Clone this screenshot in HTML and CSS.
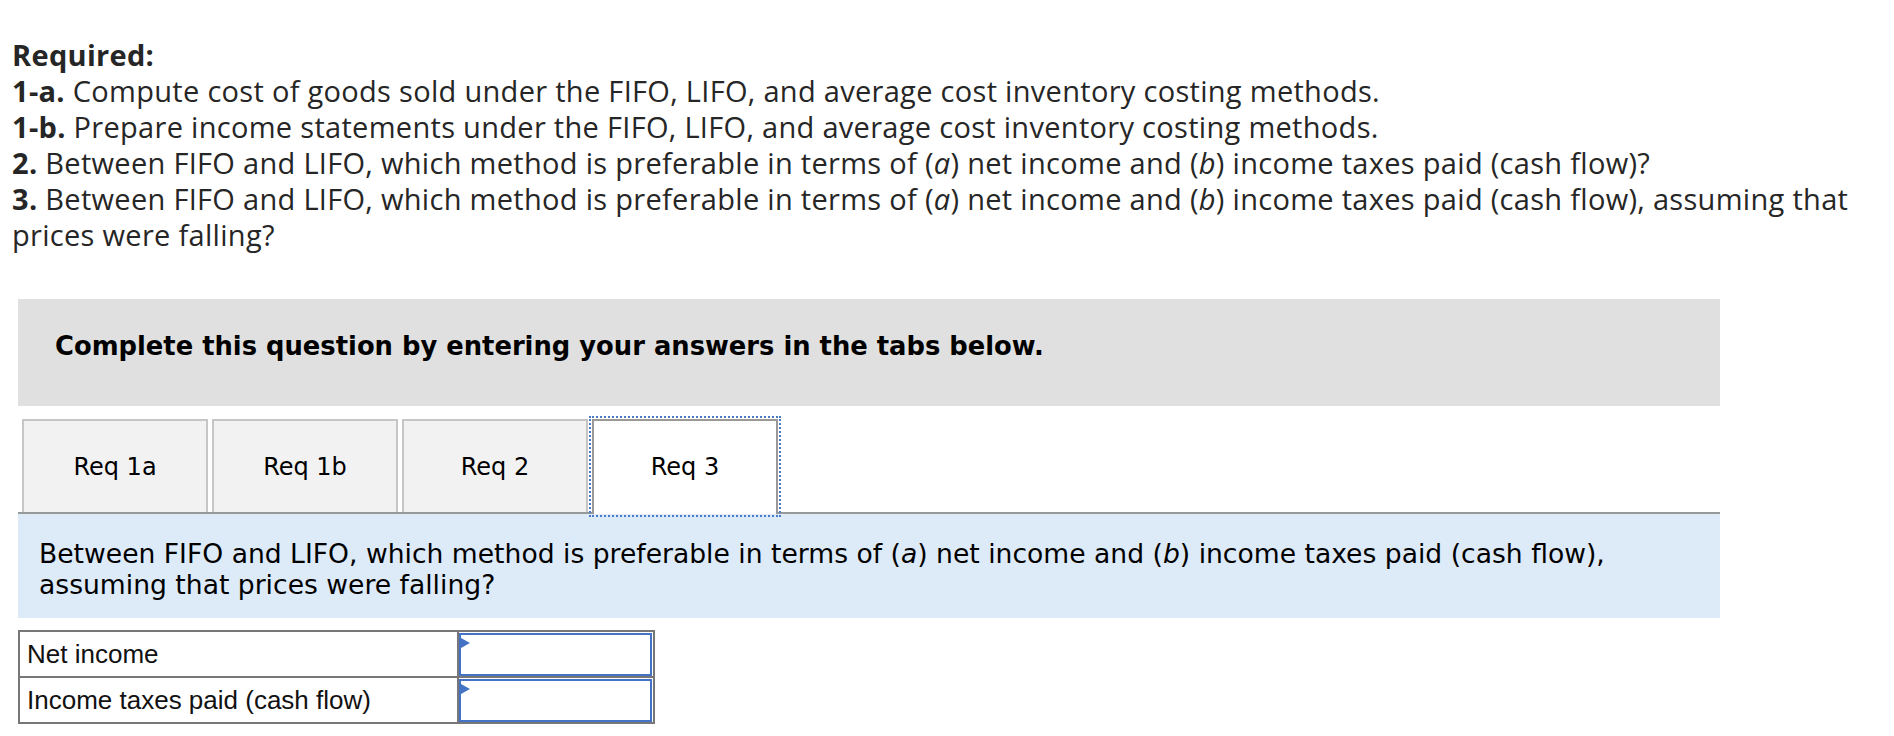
FILE: index.html
```html
<!DOCTYPE html>
<html>
<head>
<meta charset="utf-8">
<link rel="stylesheet" href="styles.css">
</head>
<body>
<div class="page">
  <div class="required">
    <p class="line"><b>Required:</b></p>
    <p class="line"><b>1-a.</b> Compute cost of goods sold under the FIFO, LIFO, and average cost inventory costing methods.</p>
    <p class="line"><b>1-b.</b> Prepare income statements under the FIFO, LIFO, and average cost inventory costing methods.</p>
    <p class="line"><b>2.</b> Between FIFO and LIFO, which method is preferable in terms of (<i>a</i>) net income and (<i>b</i>) income taxes paid (cash flow)?</p>
    <p class="line"><b>3.</b> Between FIFO and LIFO, which method is preferable in terms of (<i>a</i>) net income and (<i>b</i>) income taxes paid (cash flow), assuming that prices were falling?</p>
  </div>

  <div class="instructions">Complete this question by entering your answers in the tabs below.</div>

  <div class="tabs">
    <div class="tab">Req 1a</div>
    <div class="tab">Req 1b</div>
    <div class="tab">Req 2</div>
    <div class="tab active">Req 3</div>
  </div>

  <div class="panel">Between FIFO and LIFO, which method is preferable in terms of (<i>a</i>) net income and (<i>b</i>) income taxes paid (cash flow), assuming that prices were falling?</div>

  <table class="answers">
    <tr>
      <td class="label">Net income</td>
      <td class="input"><div class="box"><span class="tri"></span></div></td>
    </tr>
    <tr>
      <td class="label">Income taxes paid (cash flow)</td>
      <td class="input"><div class="box"><span class="tri"></span></div></td>
    </tr>
  </table>
</div>
</body>
</html>
```
FILE: styles.css
```css
html, body {
  margin: 0;
  padding: 0;
  background: #ffffff;
}

.page {
  padding-top: 37px;
}

.required {
  padding-left: 12px;
  padding-right: 0;
  font-family: "Open Sans", "Lato", sans-serif;
  font-size: 29px;
  letter-spacing: 0.3px;
  line-height: 36px;
  color: #262626;
}

.line {
  margin: 0;
}

.line b {
  font-weight: 700;
}

.line b,
.line i,
.panel i {
  display: inline-block;
}

.instructions {
  margin: 46px 0 0 18px;
  width: 1702px;
  height: 107px;
  box-sizing: border-box;
  padding-left: 37px;
  padding-bottom: 14px;
  display: flex;
  align-items: center;
  background: #e0e0e0;
  font-family: "DejaVu Sans", Verdana, sans-serif;
  font-weight: bold;
  font-size: 25.8px;
  color: #000;
}

.tabs {
  display: flex;
  gap: 4px;
  margin: 13px 0 0 22px;
  height: 93px;
  position: relative;
  z-index: 1;
}

.tab {
  width: 186px;
  height: 93px;
  box-sizing: border-box;
  border: 2px solid #c6c6c6;
  border-bottom: none;
  background: #f2f2f2;
  display: flex;
  align-items: center;
  justify-content: center;
  font-family: "DejaVu Sans", Verdana, sans-serif;
  font-size: 24px;
  color: #000;
}

.tab.active {
  background: #ffffff;
  border-color: #999999;
  height: 95px;
  outline: 2px dotted #4a7bc4;
  outline-offset: 1px;
  padding-bottom: 2px;
}

.panel {
  margin-left: 18px;
  width: 1702px;
  box-sizing: border-box;
  border-top: 2px solid #979a9a;
  background: #ddeaf7;
  padding: 24px 21px 18px 21px;
  font-family: "DejaVu Sans", Verdana, sans-serif;
  font-size: 26.6px;
  line-height: 31px;
  color: #000;
}

.answers {
  margin: 12px 0 0 18px;
  border-collapse: collapse;
  font-family: "Liberation Sans", Arial, sans-serif;
  font-size: 26px;
  color: #111;
}

.answers td {
  border: 2px solid #777777;
  height: 46px;
  box-sizing: border-box;
  padding: 0;
}

.answers td.label {
  width: 439px;
  padding-left: 7px;
}

.answers td.input {
  width: 196px;
  padding: 1px 1px 0 0;
  vertical-align: top;
}

.box {
  position: relative;
  height: 43px;
  box-sizing: border-box;
  border: 2px solid #4472c4;
}

.tri {
  position: absolute;
  left: 0;
  top: 3px;
  width: 0;
  height: 0;
  border-top: 5px solid transparent;
  border-bottom: 5px solid transparent;
  border-left: 9px solid #4472c4;
}
```
